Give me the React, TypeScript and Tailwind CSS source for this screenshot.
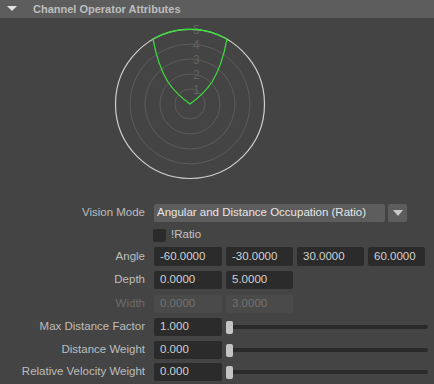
import React from "react"

const font = { fontFamily: '"Liberation Sans", Arial, sans-serif' }

function Field({ value, disabled = false, w = "w-[68px]" }: { value: string; disabled?: boolean; w?: string }) {
  return (
    <div
      className={`${w} h-full rounded-[2px] pl-[6px] flex items-center ${
        disabled ? "bg-[#4a4a4a] text-[#727272]" : "bg-[#2b2b2b] text-[#d2d2d2]"
      }`}
    >
      {value}
    </div>
  )
}

function Row({ label, children, className = "", dim = false }: { label: string; children?: React.ReactNode; className?: string; dim?: boolean }) {
  return (
    <div className={`flex items-stretch ${className}`}>
      <div className={`w-[145px] shrink-0 text-right flex items-center justify-end ${dim ? "text-[#6c6c6c]" : "text-[#bdbdbd]"}`}>
        {label}
      </div>
      <div className="ml-[9px] flex gap-[4px] flex-1">{children}</div>
    </div>
  )
}

function SliderRow({ label, value, className = "" }: { label: string; value: string; className?: string }) {
  return (
    <Row label={label} className={className}>
      <Field value={value} />
      <div className="flex items-center flex-1 pr-[6px]">
        <div className="w-[7px] h-[13px] rounded-[2px] bg-[#c4c4c4] shrink-0" />
        <div className="h-[4px] flex-1 bg-[#2a2a2a] rounded-r-full" />
      </div>
    </Row>
  )
}

function Radar() {
  // center 76,76 ; rings every 15px
  const cx = 76
  const cy = 76
  return (
    <svg width="152" height="152" viewBox="0 0 152 152" className="ml-[114px] mt-[10px] overflow-visible">
      {[15, 30, 45, 60].map((r) => (
        <circle key={r} cx={cx} cy={cy} r={r} fill="none" stroke="#5c5c5c" strokeWidth="1" />
      ))}
      <circle cx={cx} cy={cy} r={74.5} fill="none" stroke="#cfcfcf" strokeWidth="1.2" />
      {["1", "2", "3", "4", "5"].map((t, i) => (
        <text key={t} x={cx + 3} y={cy - 15 * (i + 1) + 5} fontSize="12" fill="#636363" style={font}>
          {t}
        </text>
      ))}
      <path
        d="M76 76 Q62 66 54 54 Q44 38 39 11 A75 75 0 0 1 113 11 Q108 38 98 54 Q90 66 76 76 Z"
        fill="none"
        stroke="#3ddc3d"
        strokeWidth="1.3"
        strokeLinejoin="round"
      />
    </svg>
  )
}

export default function App() {
  return (
    <main className="w-[434px] h-[384px] bg-[#444444] overflow-hidden text-[11.5px]" style={font}>
      {/* header */}
      <header className="h-[18px] bg-[#5d5d5d] flex items-center">
        <svg width="12" height="8" viewBox="0 0 12 8" className="ml-[6px]">
          <path d="M1 1 L11 1 L6 6 Z" fill="#e2e2e2" />
        </svg>
        <span className="ml-[15px] text-[11px] font-bold text-[#bdbdbd]">Channel Operator Attributes</span>
      </header>

      <Radar />

      {/* form */}
      <div className="flex flex-col mt-[24px]">
        <Row label="Vision Mode" className="h-[18px]">
          <div className="w-[231px] h-full bg-[#5d5d5d] rounded-[2px] flex items-center pl-[3px] text-[#e6e6e6]">
            Angular and Distance Occupation (Ratio)
          </div>
          <div className="w-[19px] h-full bg-[#5d5d5d] rounded-[2px] flex items-center justify-center -ml-[1px]">
            <svg width="10" height="6" viewBox="0 0 10 6">
              <path d="M0 0 L10 0 L5 6 Z" fill="#c8c8c8" />
            </svg>
          </div>
        </Row>

        <div className="flex items-center mt-[6px] h-[14px]">
          <div className="ml-[153px] w-[13px] h-[13px] bg-[#2b2b2b] rounded-[2px]" />
          <span className="ml-[5px] text-[#c4c4c4]">!Ratio</span>
        </div>

        <Row label="Angle" className="h-[19px] mt-[5px]">
          <Field value="-60.0000" />
          <Field value="-30.0000" w="w-[67px]" />
          <Field value="30.0000" w="w-[67px]" />
          <Field value="60.0000" w="w-[57px]" />
        </Row>

        <Row label="Depth" className="h-[18px] mt-[5px]">
          <Field value="0.0000" />
          <Field value="5.0000" w="w-[67px]" />
        </Row>

        <Row label="Width" className="h-[18px] mt-[6px]" dim>
          <Field value="0.0000" disabled />
          <Field value="3.0000" disabled w="w-[67px]" />
        </Row>

        <SliderRow label="Max Distance Factor" value="1.000" className="h-[18px] mt-[5px]" />
        <SliderRow label="Distance Weight" value="0.000" className="h-[18px] mt-[5px]" />
        <SliderRow label="Relative Velocity Weight" value="0.000" className="h-[18px] mt-[4px]" />
      </div>
    </main>
  )
}
